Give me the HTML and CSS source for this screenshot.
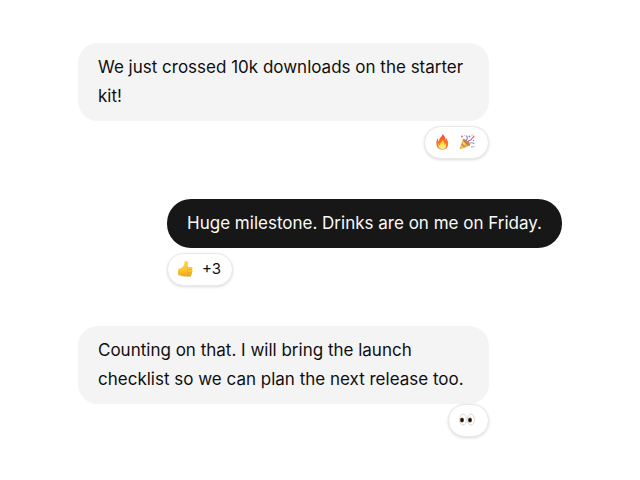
FILE: index.html
```html
<!DOCTYPE html>
<html lang="en">
<head>
  <meta charset="utf-8">
  <meta name="viewport" content="width=device-width, initial-scale=1">
  <title>Conversation</title>
  <link rel="stylesheet" href="styles.css">
</head>
<body>
  <main class="thread">
    <article class="message">
      <p class="bubble">We just crossed 10k downloads on the starter kit!</p>
      <div class="reactions">
        <svg class="emoji" viewBox="0 0 32 32" role="img" aria-label="Fire">
          <defs>
            <linearGradient id="flame" x1="0" y1="0" x2="0" y2="1">
              <stop offset="0" stop-color="#ee4b2b"/><stop offset=".6" stop-color="#fa7826"/><stop offset="1" stop-color="#f46a20"/>
            </linearGradient>
            <linearGradient id="core" x1="0" y1="0" x2="0" y2="1">
              <stop offset="0" stop-color="#ffb52c"/><stop offset=".6" stop-color="#ffe45a"/><stop offset="1" stop-color="#fff4a8"/>
            </linearGradient>
          </defs>
          <path fill="url(#flame)" d="M15 0c3 3 7 7 6 13 1-1 1-3 1-5 4 5 5 9 4 14-1 6-5 9-11 9S3 27 3 21c-1-4 0-9 3-13 0 3 0 5 2 7 0-4 1-6 4-9 2-2 3-4 3-6z"/>
          <path fill="url(#core)" d="M16 10c0 5 4 7 3 12 1-1 2-2 2-4 3 6 1 12-6 12S5 24 7 18c0 3 1 4 3 5-1-6 5-7 6-13z"/>
        </svg>
        <svg class="emoji" viewBox="0 0 32 32" role="img" aria-label="Party popper">
          <path fill="#e8ac38" d="M1 31 8 10c5 2 12 8 14 13z"/>
          <path fill="#fbd15f" d="m4 25 6-13 5 5-8 11z"/>
          <path fill="#b98342" d="M8 10c4-2 16 9 14 13-4 2-16-9-14-13z"/>
          <path fill="#de8b50" d="m6 18 8 8-4 1-6-5z"/>
          <path fill="none" stroke="#a97bd4" stroke-width="2.4" stroke-linecap="round" d="M14 13c4-3 3-7 1-9"/>
          <path fill="none" stroke="#e9667b" stroke-width="2.4" stroke-linecap="round" d="M18 16c2-6 5-1 7-6 1-3 4-2 5-6"/>
          <path fill="none" stroke="#6aa6e4" stroke-width="2.4" stroke-linecap="round" d="M20 19c4-3 6-2 10 0"/>
          <g fill="#e8667a"><circle cx="6" cy="5" r="2"/><circle cx="29" cy="13" r="1.4"/><circle cx="26" cy="26" r="1.6"/></g>
          <g fill="#5799e2"><circle cx="21" cy="5" r="2"/><circle cx="30" cy="25" r="1.2"/></g>
          <g fill="#efbf3d"><circle cx="11" cy="3" r="1.2"/><circle cx="26" cy="2" r="1.5"/></g>
        </svg>
      </div>
    </article>

    <article class="message sent">
      <p class="bubble">Huge milestone. Drinks are on me on Friday.</p>
      <div class="reactions">
        <svg class="emoji" viewBox="0 0 32 32" role="img" aria-label="Thumbs up">
          <defs>
            <linearGradient id="hand" x1="0" y1="0" x2="0" y2="1">
              <stop offset="0" stop-color="#ffd34b"/><stop offset=".6" stop-color="#fec52e"/><stop offset="1" stop-color="#eda222"/>
            </linearGradient>
          </defs>
          <path fill="url(#hand)" d="M2 15c3 0 6-1 8-4 2-3 3-5 3-9 0-3 6-3 7 1 1 3 0 6-1 9h7c4 0 4 4 1 5 3 1 3 5 0 6 2 1 1 5-1 5 1 2 0 3-3 3H13c-4 0-5-2-8-2H2c-3-3-3-11 0-14z"/>
          <path fill="none" stroke="#dda02b" stroke-width="1" stroke-linecap="round" d="M19 12c-2 0-3 1-4 2m5 3h7m-7 6h7m-7 5h5m-5-11c-2 1-2 4 0 6-2 1-1 4 0 5"/>
        </svg>
        <span>+3</span>
      </div>
    </article>

    <article class="message close">
      <p class="bubble">Counting on that. I will bring the launch checklist so we can plan the next release too.</p>
      <div class="reactions">
        <svg class="emoji" viewBox="0 0 32 32" role="img" aria-label="Eyes">
          <g fill="#fff" stroke="#cdcdcd" stroke-width="1.6"><ellipse cx="8" cy="15" rx="6.8" ry="11"/><ellipse cx="24" cy="15" rx="6.8" ry="11"/></g>
          <g fill="#6b4323"><ellipse cx="6" cy="16" rx="4" ry="5"/><ellipse cx="22" cy="16" rx="4" ry="5"/></g>
          <g fill="#160e0a"><ellipse cx="6" cy="16" rx="2.6" ry="3.6"/><ellipse cx="22" cy="16" rx="2.6" ry="3.6"/></g>
        </svg>
      </div>
    </article>
  </main>
</body>
</html>
```
FILE: styles.css
```css
* {
  box-sizing: border-box;
}

body {
  display: flex;
  align-items: center;
  justify-content: center;
  min-height: 100vh;
  margin: 0;
  padding: 24px;
  background: #fff;
  color: #0f0f0f;
  font: 17px/29px Inter, "Liberation Sans", sans-serif;
}

.thread {
  display: flex;
  flex-direction: column;
  gap: 40px;
  width: 100%;
  max-width: 484px;
}

.message {
  display: flex;
  flex-direction: column;
  align-items: flex-end;
  gap: 5px;
  align-self: flex-start;
  max-width: 85%;
}

.bubble {
  margin: 0;
  padding: 10px 20px;
  border-radius: 20px;
  background: #f4f4f4;
}

.sent {
  align-items: flex-start;
  align-self: flex-end;
}

.sent .bubble {
  border-radius: 24px;
  background: #171717;
  color: #fafafa;
}

.close {
  gap: 0;
}

.reactions {
  display: flex;
  align-items: center;
  gap: 8px;
  height: 33px;
  padding: 0 13px 2px 10px;
  border: 1px solid #e8e8e8;
  border-radius: 17px;
  background: #fff;
  box-shadow: 0 1px 3px rgb(0 0 0 / 14%);
  font-size: 15px;
  line-height: 24px;
}

.sent .reactions {
  padding-right: 11px;
}

.emoji {
  width: 16px;
  height: 16px;
}
```
